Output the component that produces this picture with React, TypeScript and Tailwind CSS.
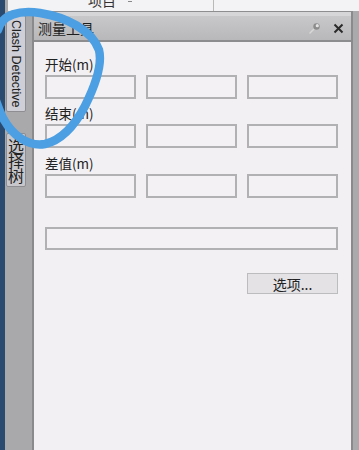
const cjk = "font-['Noto_Sans_CJK_SC','Noto_Sans',sans-serif]"

function Field() {
  return <div className="h-[24px] border-2 border-[#b1b0b3] bg-[#f3f1f4]" />
}

function Group({ label }: { label: string }) {
  return (
    <div className="flex flex-col">
      <div className={`h-[16px] text-[13.5px] leading-[16px] text-[#222] ${cjk}`}>{label}</div>
      <div className="mt-[3px] grid grid-cols-3 gap-[10px]">
        <Field />
        <Field />
        <Field />
      </div>
    </div>
  )
}

function PinIcon() {
  return (
    <svg width="12" height="12" viewBox="0 0 12 12">
      <path d="M1 11 L5 7" stroke="#d8d8d8" strokeWidth="1.5" strokeLinecap="round" />
      <circle cx="7.5" cy="4.5" r="3.2" fill="#8c8c8c" />
      <circle cx="8.3" cy="3.7" r="1.6" fill="#e4e4e4" />
    </svg>
  )
}

function CloseIcon() {
  return (
    <svg width="11" height="11" viewBox="0 0 11 11">
      <path d="M1.5 1.5 L9.5 9.5 M9.5 1.5 L1.5 9.5" stroke="#2a2a2a" strokeWidth="2" />
    </svg>
  )
}

export default function App() {
  return (
    <div className="relative flex h-[450px] w-[359px] flex-col overflow-hidden bg-[#a9a8ab]">
      {/* top strip, mostly cut off */}
      <div className="flex h-[11px] shrink-0">
        <div className="w-[5px] bg-[#2b4a6f]" />
        <div className="w-[3px] bg-[#a9a8ab]" />
        <div className="relative flex flex-1 overflow-hidden bg-[#f3f2f4]">
          <span className={`ml-[80px] -mt-[9px] text-[14px] leading-[18px] text-[#333] ${cjk}`}>项目</span>
          <span className="ml-[12px] mt-[1px] h-[1px] w-[4px] bg-[#888]" />
          <span className="ml-[81px] h-[11px] w-[1px] bg-[#b9b9b9]" />
        </div>
      </div>

      <div className="flex flex-1">
        <div className="w-[5px] bg-[#2b4a6f]" />

        {/* side tabs */}
        <div className="flex w-[27px] flex-col items-start pl-[1px] pt-[4px] bg-[#a9a8ab]">
          <div className="flex h-[97px] w-[20px] items-center justify-center rounded-[2px] border border-[#8e8e92] bg-[#cfd0d7]">
            <span className="text-[12.5px] leading-[18px] text-[#222] [writing-mode:vertical-rl] font-['Liberation_Sans',sans-serif]">
              Clash Detective
            </span>
          </div>
          <div className="mt-[21px] flex h-[54px] w-[20px] items-center justify-center rounded-[2px] border border-[#8e8e92] bg-[#c8c7cb]">
            <span className={`text-[16px] leading-[18px] tracking-[-1px] text-[#222] [writing-mode:vertical-rl] ${cjk}`}>
              选择树
            </span>
          </div>
        </div>

        {/* panel */}
        <div className="flex w-[321px] flex-col border-x-2 border-x-[#8a8a8c] border-t border-t-[#8e8e90]">
          <div className="h-[4px] bg-[#d6d6d8]" />
          <div className="flex h-[26px] items-center bg-gradient-to-b from-[#c8c8ca] to-[#b8b8ba] pl-[4px] pr-[7px] border-b-2 border-b-[#8d8d8f]">
            <span className={`text-[14px] text-[#1d1d1d] ${cjk}`}>测量工具</span>
            <div className="ml-auto flex items-center gap-[12px]">
              <PinIcon />
              <CloseIcon />
            </div>
          </div>

          <div className="flex flex-1 flex-col bg-[#f2f0f3] pl-[11px] pr-[13px] pt-[14px]">
            <Group label="开始(m)" />
            <div className="mt-[6px]">
              <Group label="结束(m)" />
            </div>
            <div className="mt-[7px]">
              <Group label="差值(m)" />
            </div>
            <div className="mt-[29px] h-[23px] border-2 border-[#b1b0b3] bg-[#f3f1f4]" />
            <div className="mt-[23px] flex justify-end">
              <button
                className={`h-[21px] w-[91px] border border-[#bcbbbe] bg-[#e4e2e5] text-[14px] leading-[18px] text-[#222] ${cjk}`}
              >
                选项...
              </button>
            </div>
          </div>
        </div>

        <div className="flex-1 bg-[#aaa9ac]" />
      </div>

      {/* hand-drawn blue annotation */}
      <svg className="pointer-events-none absolute left-0 top-0" width="120" height="160" viewBox="0 0 120 160">
        <path
          d="M -2 30 C 2 14, 20 10, 40 13 C 66 17, 92 30, 99 50 C 103 66, 93 90, 85 106 C 75 125, 62 140, 45 144 C 28 147, 12 135, 3 118 C -2 108, -4 100, -6 95"
          fill="none"
          stroke="#4b9fe2"
          strokeWidth="8.5"
          strokeLinecap="round"
        />
      </svg>
    </div>
  )
}
